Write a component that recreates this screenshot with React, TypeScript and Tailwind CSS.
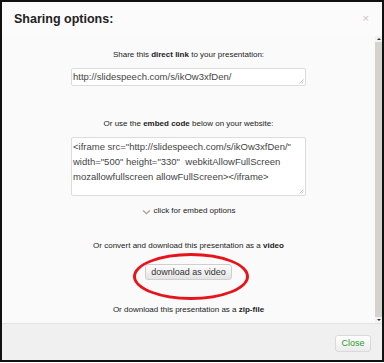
import React from 'react';

const font = { fontFamily: '"Liberation Sans", Arial, sans-serif' };

const ScrollBar: React.FC = () => (
  <div className="flex w-[7px] flex-col bg-[#d6d3ce]">
    <div className="flex h-[6px] items-center justify-center bg-[#f2f2f2]">
      <div className="h-0 w-0 border-x-[2px] border-b-[2px] border-x-transparent border-b-[#333]" />
    </div>
    <div className="flex-1" />
    <div className="flex h-[6px] items-center justify-center bg-[#f2f2f2]">
      <div className="h-0 w-0 border-x-[2px] border-t-[2px] border-x-transparent border-t-[#333]" />
    </div>
  </div>
);

const Grip: React.FC = () => (
  <svg width="5" height="5" viewBox="0 0 5 5" className="pointer-events-none absolute bottom-[2px] right-[2px]">
    <path d="M4.5 0.5 L0.5 4.5 M4.5 2.5 L2.5 4.5" stroke="#b8b8b8" strokeWidth="0.8" />
  </svg>
);

const Field: React.FC<{ value: string; className: string }> = ({ value, className }) => (
  <div className="relative mt-[7px]">
    <textarea
      readOnly
      defaultValue={value}
      className={`block w-[235px] resize-none overflow-hidden rounded-[2px] border border-[#dcdcdc] bg-white px-[1px] text-[9.5px] text-[#444] outline-none ${className}`}
    />
    <Grip />
  </div>
);

export default function App() {
  return (
    <div className="h-[363px] w-[384px] bg-white" style={font}>
      <div className="flex h-[362px] w-[384px] flex-col border-2 border-[#111] bg-white">
        {/* header */}
        <div className="relative flex h-[34px] shrink-0 items-center bg-[#fbfbfb] pl-[12px]">
          <h1 className="text-[12.5px] font-bold leading-none text-[#222]">Sharing options:</h1>
          <span className="absolute right-[13px] top-[11px] text-[11px] leading-none text-[#c4c4c4]">×</span>
        </div>

        {/* body */}
        <div className="flex h-[287px] shrink-0">
          <div className="relative flex flex-1 flex-col items-center bg-[#fafafa] text-[8px] leading-[12px] text-[#222]">
            <p className="mt-[13px]">
              Share this <b>direct link</b> to your presentation:
            </p>
            <Field value="http://slidespeech.com/s/ikOw3xfDen/" className="h-[18px] py-0 leading-[16px]" />
            <p className="mt-[32px]">
              Or use the <b>embed code</b> below on your website:
            </p>
            <Field
              value={'<iframe src="http://slidespeech.com/s/ikOw3xfDen/" width="500" height="330"  webkitAllowFullScreen mozallowfullscreen allowFullScreen></iframe>'}
              className="h-[59px] pt-[1px] leading-[15px]"
            />
            <p className="mt-[9px] flex items-center gap-[3px]">
              <svg width="9" height="6" viewBox="0 0 9 6" className="mt-[1px]">
                <path d="M1 1.5 L4.5 4.5 L8 1.5" fill="none" stroke="#a8a8a8" strokeWidth="1.4" />
              </svg>
              click for embed options
            </p>
            <p className="mt-[23px]">
              Or convert and download this presentation as a <b>video</b>
            </p>
            <button className="mt-[12px] h-[16px] w-[87px] rounded-[3px] border border-[#cfcfcf] bg-gradient-to-b from-[#fdfdfd] to-[#e4e4e4] text-[9px] leading-none text-[#333]">
              download as video
            </button>
            <p className="mt-[24px]">
              Or download this presentation as a <b>zip-file</b>
            </p>

            {/* red highlight */}
            <div className="pointer-events-none absolute left-[131px] top-[217px] h-[47px] w-[116px] rounded-[50%] border-[3px] border-[#e5151b]" />
          </div>
          <ScrollBar />
        </div>

        {/* footer */}
        <div className="flex flex-1 items-start justify-end border-t border-[#e4e4e4] bg-[#f0f0f0] pr-[11px] pt-[11px]">
          <button className="h-[17px] w-[36px] rounded-[3px] border border-[#dadada] bg-gradient-to-b from-[#ffffff] to-[#ececec] text-[9px] leading-none text-[#2e9a2e]">
            Close
          </button>
        </div>
      </div>
    </div>
  );
}
